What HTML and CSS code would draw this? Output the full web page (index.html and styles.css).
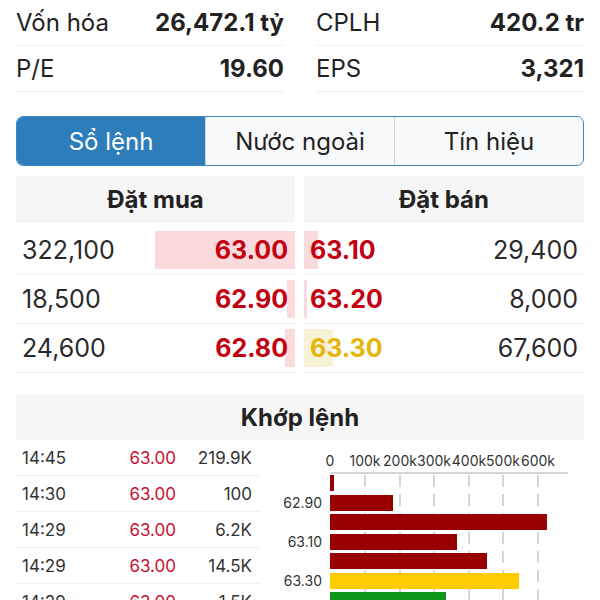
FILE: index.html
```html
<!DOCTYPE html>
<html lang="vi">
<head>
    <meta charset="UTF-8">
    <meta name="viewport" content="width=device-width, initial-scale=1.0">
    <title>Sổ lệnh</title>
    <link rel="stylesheet" href="styles.css">
</head>
<body>
    <div class="stats">
        <div class="stat"><span class="label">Vốn hóa</span><span class="value">26,472.1 tỷ</span></div>
        <div class="stat"><span class="label">CPLH</span><span class="value">420.2 tr</span></div>
        <div class="stat"><span class="label">P/E</span><span class="value">19.60</span></div>
        <div class="stat"><span class="label">EPS</span><span class="value">3,321</span></div>
    </div>

    <div class="tabs">
        <div class="tab active">Sổ lệnh</div>
        <div class="tab">Nước ngoài</div>
        <div class="tab">Tín hiệu</div>
    </div>

    <div class="book">
        <div class="side bid">
            <div class="side-head">Đặt mua</div>
            <div class="row"><span class="bar red" style="width: 140px"></span><span class="qty">322,100</span><span class="price">63.00</span></div>
            <div class="row"><span class="bar red" style="width: 8px"></span><span class="qty">18,500</span><span class="price">62.90</span></div>
            <div class="row"><span class="bar red" style="width: 10px"></span><span class="qty">24,600</span><span class="price">62.80</span></div>
        </div>
        <div class="side ask">
            <div class="side-head">Đặt bán</div>
            <div class="row"><span class="bar red" style="width: 14px"></span><span class="price">63.10</span><span class="qty">29,400</span></div>
            <div class="row"><span class="bar red" style="width: 3px"></span><span class="price">63.20</span><span class="qty">8,000</span></div>
            <div class="row"><span class="bar yellow" style="width: 29px"></span><span class="price ref">63.30</span><span class="qty">67,600</span></div>
        </div>
    </div>

    <div class="matched">
        <div class="matched-head">Khớp lệnh</div>
        <div class="matched-body">
            <div class="trades">
                <div class="trade"><span>14:45</span><span class="tprice">63.00</span><span class="tvol">219.9K</span></div>
                <div class="trade"><span>14:30</span><span class="tprice">63.00</span><span class="tvol">100</span></div>
                <div class="trade"><span>14:29</span><span class="tprice">63.00</span><span class="tvol">6.2K</span></div>
                <div class="trade"><span>14:29</span><span class="tprice">63.00</span><span class="tvol">14.5K</span></div>
                <div class="trade"><span>14:29</span><span class="tprice">63.00</span><span class="tvol">1.5K</span></div>
            </div>
            <svg class="chart" width="304" height="170" viewBox="0 0 304 170">
                <g class="grid">
                    <line x1="85" y1="35" x2="85" y2="170"/>
                    <line x1="120" y1="35" x2="120" y2="170"/>
                    <line x1="154" y1="35" x2="154" y2="170"/>
                    <line x1="189" y1="35" x2="189" y2="170"/>
                    <line x1="223" y1="35" x2="223" y2="170"/>
                    <line x1="258" y1="35" x2="258" y2="170"/>
                </g>
                <line class="axis" x1="50" y1="33" x2="288" y2="33"/>
                <g class="ticks" text-anchor="middle">
                    <text x="50" y="26">0</text>
                    <text x="85" y="26">100k</text>
                    <text x="120" y="26">200k</text>
                    <text x="154" y="26">300k</text>
                    <text x="189" y="26">400k</text>
                    <text x="223" y="26">500k</text>
                    <text x="258" y="26">600k</text>
                </g>
                <rect x="50" y="35" width="4" height="16" fill="#990000"/>
                <rect x="50" y="55" width="63" height="16" fill="#990000"/>
                <rect x="50" y="74" width="217" height="16" fill="#990000"/>
                <rect x="50" y="94" width="127" height="16" fill="#990000"/>
                <rect x="50" y="113" width="157" height="16" fill="#990000"/>
                <rect x="50" y="133" width="189" height="16" fill="#ffcc00"/>
                <rect x="50" y="152" width="116" height="16" fill="#109618"/>
                <g class="ticks" text-anchor="end">
                    <text x="42" y="68">62.90</text>
                    <text x="42" y="107">63.10</text>
                    <text x="42" y="146">63.30</text>
                </g>
            </svg>
        </div>
    </div>
</body>
</html>
```

FILE: styles.css
```css
body {
    font-family: Inter, "Liberation Sans", sans-serif;
    background-color: white;
    color: #222;
    margin: 0;
    padding: 0 16px;
    overflow: hidden;
}
.stats {
    display: grid;
    grid-template-columns: 1fr 1fr;
    column-gap: 32px;
}
.stat {
    display: flex;
    justify-content: space-between;
    align-items: center;
    height: 45px;
    border-bottom: 1px solid #efefef;
    font-size: 24px;
}
.stat .value {
    font-weight: 700;
}
.tabs {
    display: flex;
    margin-top: 24px;
    height: 48px;
    border: 1.5px solid #3b88c4;
    border-radius: 7px;
    overflow: hidden;
    background-color: #f8f9fb;
}
.tab {
    flex: 1;
    display: flex;
    align-items: center;
    justify-content: center;
    font-size: 24px;
    color: #222;
    border-left: 1px solid #d0d4d8;
}
.tab:first-child {
    border-left: none;
}
.tab.active {
    background-color: #2e7dbb;
    color: white;
}
.book {
    display: grid;
    grid-template-columns: 279px 280px;
    column-gap: 9px;
    margin-top: 10px;
}
.side-head {
    height: 47px;
    display: flex;
    align-items: center;
    justify-content: center;
    background-color: #f6f6f6;
    font-size: 24px;
    font-weight: 700;
    margin-bottom: 3px;
}
.row {
    position: relative;
    display: flex;
    justify-content: space-between;
    align-items: center;
    height: 48px;
    padding: 0 6px;
    border-bottom: 1px solid #f0f0f0;
    font-size: 25px;
    color: #2a2a2a;
}
.row span {
    position: relative;
}
.bar {
    position: absolute !important;
    top: 5px;
    bottom: 5px;
}
.bid .bar {
    right: 0;
}
.ask .bar {
    left: 0;
}
.bar.red {
    background-color: #fadadc;
}
.bar.yellow {
    background-color: #f7f1d8;
}
.price {
    font-weight: 700;
    color: #c20012;
}
.bid .price {
    margin-right: 1px;
}
.price.ref {
    color: #e5b50b;
}
.matched {
    margin-top: 21px;
}
.matched-head {
    height: 46px;
    display: flex;
    align-items: center;
    justify-content: center;
    background-color: #f6f6f6;
    font-size: 24px;
    font-weight: 700;
}
.matched-body {
    display: flex;
    gap: 20px;
}
.trades {
    width: 244px;
}
.trade {
    display: grid;
    grid-template-columns: 1fr 80px 76px;
    align-items: center;
    height: 35px;
    padding-left: 6px;
    padding-right: 8px;
    border-bottom: 1px solid #f0f0f0;
    font-size: 17px;
    color: #333;
}
.tprice, .tvol {
    text-align: right;
}
.tprice {
    color: #c8102e;
}
.chart {
    display: block;
    flex-shrink: 0;
}
.chart .ticks {
    font-family: Inter, "Liberation Sans", sans-serif;
    font-size: 14px;
    fill: #333;
}
.chart .grid line {
    stroke: #c8c8c8;
    stroke-width: 1.5;
    stroke-dasharray: 12 7;
}
.chart .axis {
    stroke: #c8c8c8;
    stroke-width: 1.5;
}
```
